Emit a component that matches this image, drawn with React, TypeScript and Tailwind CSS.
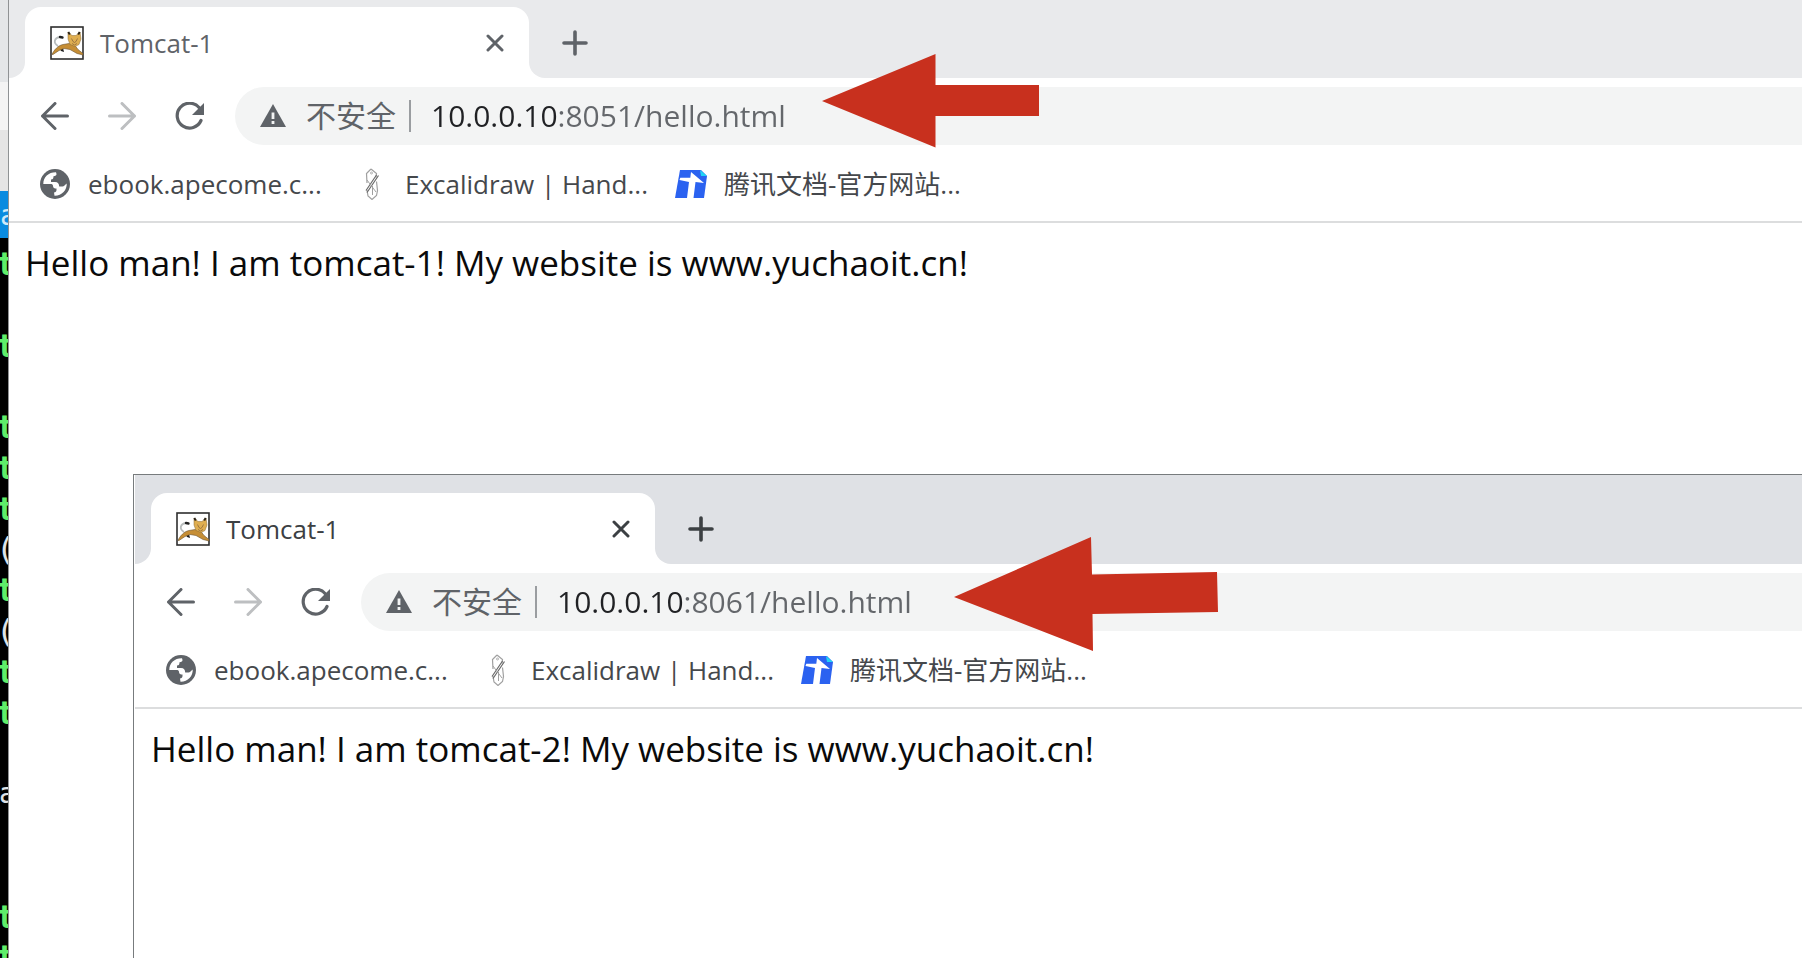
import React from "react";

type BrowserProps = {
  id: string;
  title: string;
  host: string;
  path: string;
  message: string;
  active: boolean;
};

const icon = "shrink-0";

function TomcatIcon() {
  return (
    <svg viewBox="0 0 34 34" className={icon + " h-[34px] w-[34px]"} aria-hidden="true">
      <rect x="1" y="1" width="32" height="32" fill="#fff" stroke="#2e2e2e" strokeWidth="1.6" />
      <path d="M8 20C3 17 4 12 10 11" fill="none" stroke="#b9bdbd" strokeWidth="1.8" />
      <path d="M10 11L12.500 11.500" stroke="#222" strokeWidth="2.400" strokeLinecap="round" />
      <path d="M9 21l2 4 3 1-1-4z" fill="#1d1d1d" />
      <path d="M2 28.500C4 24 8 19.500 13 18.500l6-1 6 2 3 4 5 4v1.500l-6-1.500-7-4-6-1-5 2-6 4z" fill="#c68e35" stroke="#6b5430" strokeWidth=".6" />
      <path d="M18 6l4 3.500h4l4-3.500 1 7-2 5.500-4 2-5-2-2-5.500z" fill="#dfae50" stroke="#8a6a35" strokeWidth=".5" />
      <path d="M18.300 6l1.500 2.500M29.700 6l-1.500 2.500" stroke="#2b2417" strokeWidth="2" />
      <path d="M21.500 12.500l1.500 3 1.500 1 1.500-1 1.500-3M22 17.500l2.500 1.500 2.500-1.500" fill="none" stroke="#8d683c" strokeWidth=".8" />
    </svg>
  );
}

function ArrowIcon({ forward = false }: { forward?: boolean }) {
  return (
    <svg viewBox="0 0 28 28" className={icon + " h-7 w-7"} fill="none" stroke="currentColor" strokeWidth="3" strokeLinecap="round" strokeLinejoin="round" aria-hidden="true">
      <path d={forward ? "M1.500 14h25M14 1.500L26.500 14 14 26.500" : "M26.500 14h-25M14 1.500L1.500 14 14 26.500"} />
    </svg>
  );
}

function ReloadIcon() {
  return (
    <svg viewBox="0 0 30 28" className={icon + " h-7 w-[30px]"} aria-hidden="true">
      <path d="M26 18.500A12.400 12.400 0 1 1 24 5.500" fill="none" stroke="currentColor" strokeWidth="3.200" strokeLinecap="round" />
      <path d="M29 1v12H17z" fill="currentColor" />
    </svg>
  );
}

function WarningIcon() {
  return (
    <svg viewBox="0 0 26 24" className={icon + " h-6 w-[26px]"} aria-hidden="true">
      <path d="M13 0l13 23H0z" fill="#5f6368" />
      <path d="M13 8.500v6.500M13 17v3" stroke="#f3f4f4" strokeWidth="2.800" />
    </svg>
  );
}

function GlobeIcon() {
  return (
    <svg viewBox="0 0 30 30" className={icon + " h-[30px] w-[30px]"} aria-hidden="true">
      <circle cx="15" cy="15" r="15" fill="#5f6368" />
      <path d="M3.300 15C3.300 8 8.500 3.200 16 3.300l.5 1.700c0 1.500-1 2-3 2.200 0 2-.5 3.300-2.500 3.300v2.500h4c3 0 4 1.500 4.200 4.500h3.300c1.500 0 2.500-1.500 4.200-3 .5 6.500-5 12.500-12.200 12.300l-.5-3.300c1.500 0 2.500-1 2.500-2.500v-1.500c-2 0-3.500-.5-3.500-2.500 0-1.500-1-2-2.500-2z" fill="#fff" />
    </svg>
  );
}

function SketchIcon() {
  return (
    <svg viewBox="0 0 14 32" className={icon + " h-8 w-[14px]"} fill="none" stroke="#a0a0a0" aria-hidden="true">
      <path d="M6 1L1.500 5.500 2 15M6 1l5.500 4.500-.5 4M2 22l1 6 4 3.500 4.500-4 1-5-1-9" strokeWidth="1.200" />
      <path d="M13.500 7.500L2 24.500M11.500 7L1 22.500" stroke="#6a6a6a" strokeWidth="1.200" />
      <path d="M7.500 18v9M2 12l9 12" strokeWidth="1" />
      <circle cx="6.500" cy="5" r="1" strokeWidth=".8" />
    </svg>
  );
}

function DocsIcon() {
  return (
    <svg viewBox="0 0 32 28" className={icon + " h-7 w-8"} aria-hidden="true">
      <path d="M5 0h21l6 6-3 22H0z" fill="#2b62f0" />
      <path d="M25 0l7 6h-6z" fill="#20d5f5" />
      <path d="M16 2l13 11-8.500-1L18.500 28H12l2-16-9.500-2 .8-2.300h10z" fill="#fff" />
    </svg>
  );
}

function Bookmark({ glyph, label, className }: { glyph: React.ReactNode; label: string; className: string }) {
  return (
    <a href="#" className={"flex shrink-0 items-center whitespace-nowrap text-[26px] leading-8 text-[#45484c] " + className}>
      {glyph}
      <span>{label}</span>
    </a>
  );
}

function BrowserWindow({ id, title, host, path, message, active }: BrowserProps) {
  const strip = active ? "bg-[#dfe1e5]" : "bg-[#e9eaec]";
  const ink = active ? "text-[#3c4043]" : "text-[#5f6368]";
  return (
    <section className="flex h-full flex-col overflow-hidden bg-white" aria-label={message}>
      <header className={(active ? "pt-[18px] " : "pt-[7px] ") + strip}>
        <div className="flex h-[71px] bg-white">
          <div className={"w-4 shrink-0 rounded-br-2xl " + strip} />
          <div className={"shrink-0 " + strip}>
            <div className={"flex h-full w-[504px] items-center rounded-t-2xl bg-white pr-[25px] pl-[25px] " + ink}>
              <TomcatIcon />
              <span className="ml-4 flex-1 text-[26px] leading-8">{title}</span>
              <button type="button" aria-label="Close tab">
                <svg viewBox="0 0 18 18" className="h-[18px] w-[18px]" stroke="currentColor" strokeWidth="3" strokeLinecap="round" aria-hidden="true">
                  <path d="M2 2l14 14M16 2L2 16" />
                </svg>
              </button>
            </div>
          </div>
          <div className={"flex flex-1 items-center rounded-bl-2xl pl-[33px] " + strip + " " + ink}>
            <button type="button" aria-label="New tab">
              <svg viewBox="0 0 26 26" className="h-[26px] w-[26px]" stroke="currentColor" strokeWidth="3.600" strokeLinecap="round" aria-hidden="true">
                <path d="M13 2v22M2 13h22" />
              </svg>
            </button>
          </div>
        </div>
      </header>

      <nav className="flex items-center py-[9px] pl-8 text-[#5f6368]">
        <button type="button" aria-label="Back"><ArrowIcon /></button>
        <button type="button" aria-label="Forward" className="ml-[39px] text-[#bdbfc1]"><ArrowIcon forward /></button>
        <button type="button" aria-label="Reload" className="ml-[39px]"><ReloadIcon /></button>
        <div className="ml-[30px] flex h-[58px] flex-1 items-center rounded-l-full bg-[#f3f4f4] pl-[25px]">
          <WarningIcon />
          <label htmlFor={id} className="ml-5 shrink-0 text-[30px] leading-9">不安全</label>
          <div className="ml-[13px] h-8 w-[2px] bg-[#9a9da0]" />
          <input
            id={id}
            type="text"
            defaultValue={host + path}
            className="ml-5 min-w-0 flex-1 bg-linear-to-r from-[#202124] from-[127px] to-[#64676b] to-[127px] bg-clip-text text-[30px] leading-9 text-transparent outline-none"
          />
        </div>
      </nav>

      <div className="flex h-[69px] items-center border-b-2 border-[#dcddde] pb-2 pl-[31px]">
        <Bookmark glyph={<GlobeIcon />} label="ebook.apecome.c..." className="w-[325px] gap-[18px]" />
        <Bookmark glyph={<SketchIcon />} label="Excalidraw | Hand..." className="w-[310px] gap-[26px]" />
        <Bookmark glyph={<DocsIcon />} label="腾讯文档-官方网站..." className="gap-[17px]" />
      </div>

      <main className="px-4 pt-4 text-[35px] leading-[48px] text-[#0a0a0a]">
        <p className="whitespace-nowrap">{message}</p>
      </main>
    </section>
  );
}

const terminalRows = ["t", "", "t", "", "t", "t", "t", "(", "t", "(", "t", "t", "", "a", "", "", "t", "t"];

function Terminal() {
  return (
    <aside className="flex h-full w-10 flex-col overflow-hidden bg-black font-['DejaVu_Sans_Mono',monospace]">
      <div className="h-[82px] shrink-0 bg-[#e4e6e8]" />
      <div className="h-[48px] shrink-0 bg-[#f4f4f4]" />
      <div className="h-[61px] shrink-0 bg-[#e5e5e5]" />
      <div className="h-[47px] shrink-0 bg-[#0a8be0] text-[28px] leading-[50px] text-[#cfe9fa]">a</div>
      <div className="mt-[6px] -ml-1 flex h-[734px] shrink-0 flex-col text-[32px] leading-10">
        {terminalRows.map((row, i) => (
          <div
            key={i}
            className={
              row === "t"
                ? "min-h-0 flex-1 font-bold text-[#5fee6a]"
                : row === "a"
                  ? "min-h-0 flex-1 pl-[3px] text-[28px] text-[#dfe3e8]"
                  : "min-h-0 flex-1 text-[#dfe3e8]"
            }
          >
            {row}
          </div>
        ))}
      </div>
    </aside>
  );
}

export default function App() {
  return (
    <div className="relative h-screen overflow-hidden bg-black font-['Open_Sans','Noto_Sans_CJK_SC',sans-serif]">
      <Terminal />
      <div className="absolute inset-y-0 right-0 left-2 border-l border-[#8f9294]">
        <BrowserWindow id="url-1" title="Tomcat-1" host="10.0.0.10" path=":8051/hello.html" message="Hello man! I am tomcat-1! My website is www.yuchaoit.cn!" active={false} />
      </div>
      <div className="absolute top-[474px] right-0 bottom-0 left-[133px] border-t border-l border-[#777b7d] pl-px">
        <BrowserWindow id="url-2" title="Tomcat-1" host="10.0.0.10" path=":8061/hello.html" message="Hello man! I am tomcat-2! My website is www.yuchaoit.cn!" active />
      </div>
      <svg viewBox="0 0 218 94" className="absolute top-[54px] left-[822px] h-[94px] w-[218px]" fill="#c8301e" aria-hidden="true">
        <path d="M0 47L113.500 0v31H217v31H113.500v31.500z" />
      </svg>
      <svg viewBox="0 0 264 114" className="absolute top-[537px] left-[954px] h-[114px] w-[264px]" fill="#c8301e" aria-hidden="true">
        <path d="M0 60L137 0l1 37.500L263 35l1 40-125.500 2 .5 37z" />
      </svg>
    </div>
  );
}
